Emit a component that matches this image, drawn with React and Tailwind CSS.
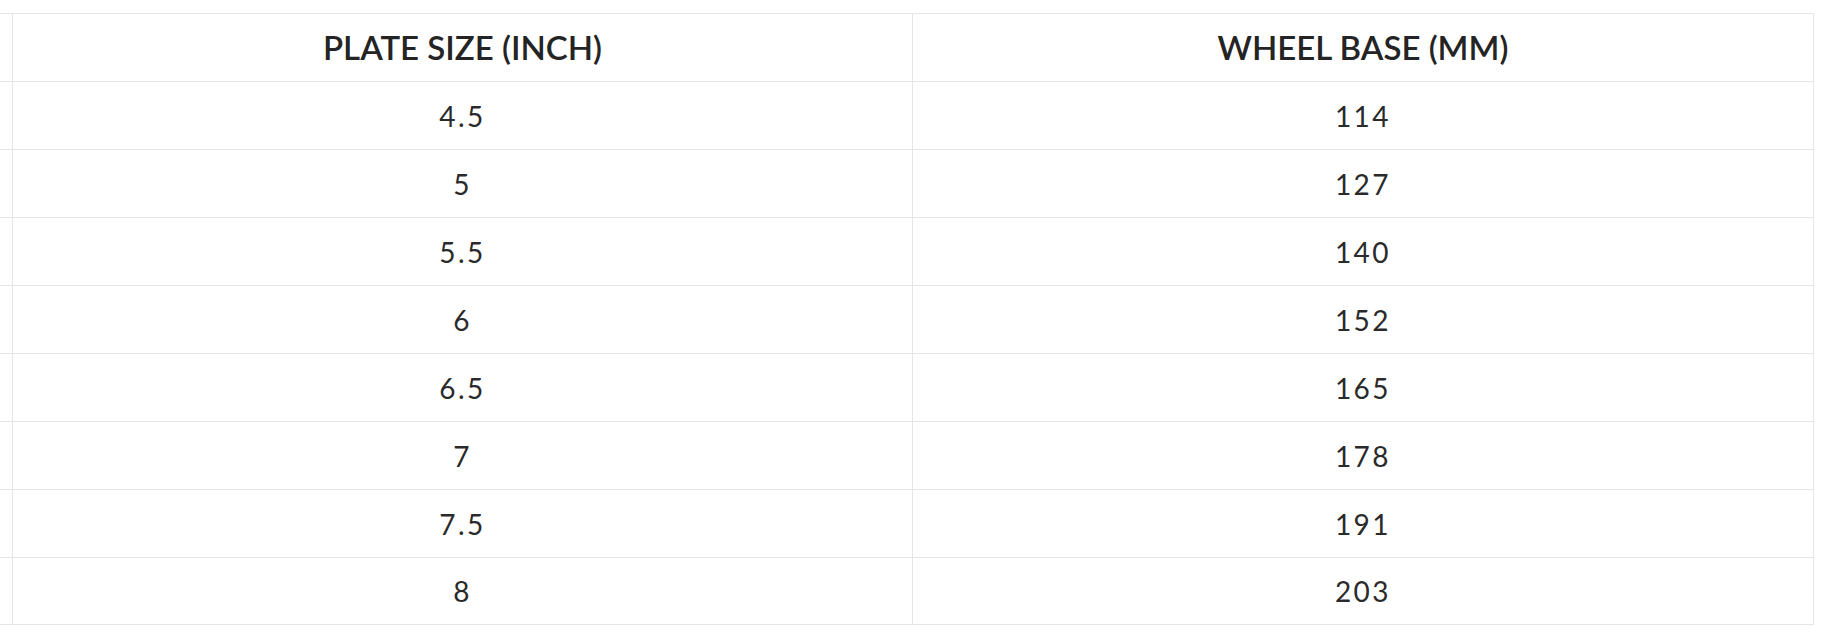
import React from 'react'

const rows = [
  ['4.5', '114'],
  ['5', '127'],
  ['5.5', '140'],
  ['6', '152'],
  ['6.5', '165'],
  ['7', '178'],
  ['7.5', '191'],
  ['8', '203'],
]

const App = () => {
  return (
    <div className="min-h-screen w-full bg-white pt-[13px]" style={{ fontFamily: 'Lato, "Noto Sans", sans-serif' }}>
      <div className="w-[1814px]">
        {/* Header */}
        <div className="grid grid-cols-[13px_900px_901px] h-[68px] border-t border-[#e5e5e5]">
          <div className="border-r border-[#e5e5e5]"></div>
          <div className="flex items-center justify-center border-r border-[#e5e5e5] text-[33px] font-semibold text-[#242424]">
            PLATE SIZE (INCH)
          </div>
          <div className="flex items-center justify-center border-r border-[#e5e5e5] text-[33px] font-semibold text-[#242424]">
            WHEEL BASE (MM)
          </div>
        </div>

        {/* Body rows */}
        {rows.map(([plate, base], i) => (
          <div
            key={plate}
            className={
              i === rows.length - 1
                ? 'grid grid-cols-[13px_900px_901px] h-[68px] border-t border-b border-[#e5e5e5]'
                : 'grid grid-cols-[13px_900px_901px] h-[68px] border-t border-[#e5e5e5]'
            }
          >
            <div className="border-r border-[#e5e5e5]"></div>
            <div className="flex items-center justify-center border-r border-[#e5e5e5] text-[28px] text-[#2a2a2a] tracking-[2.5px]">
              {plate}
            </div>
            <div className="flex items-center justify-center border-r border-[#e5e5e5] text-[28px] text-[#2a2a2a] tracking-[2.5px]">
              {base}
            </div>
          </div>
        ))}
      </div>
    </div>
  )
}

export default App
